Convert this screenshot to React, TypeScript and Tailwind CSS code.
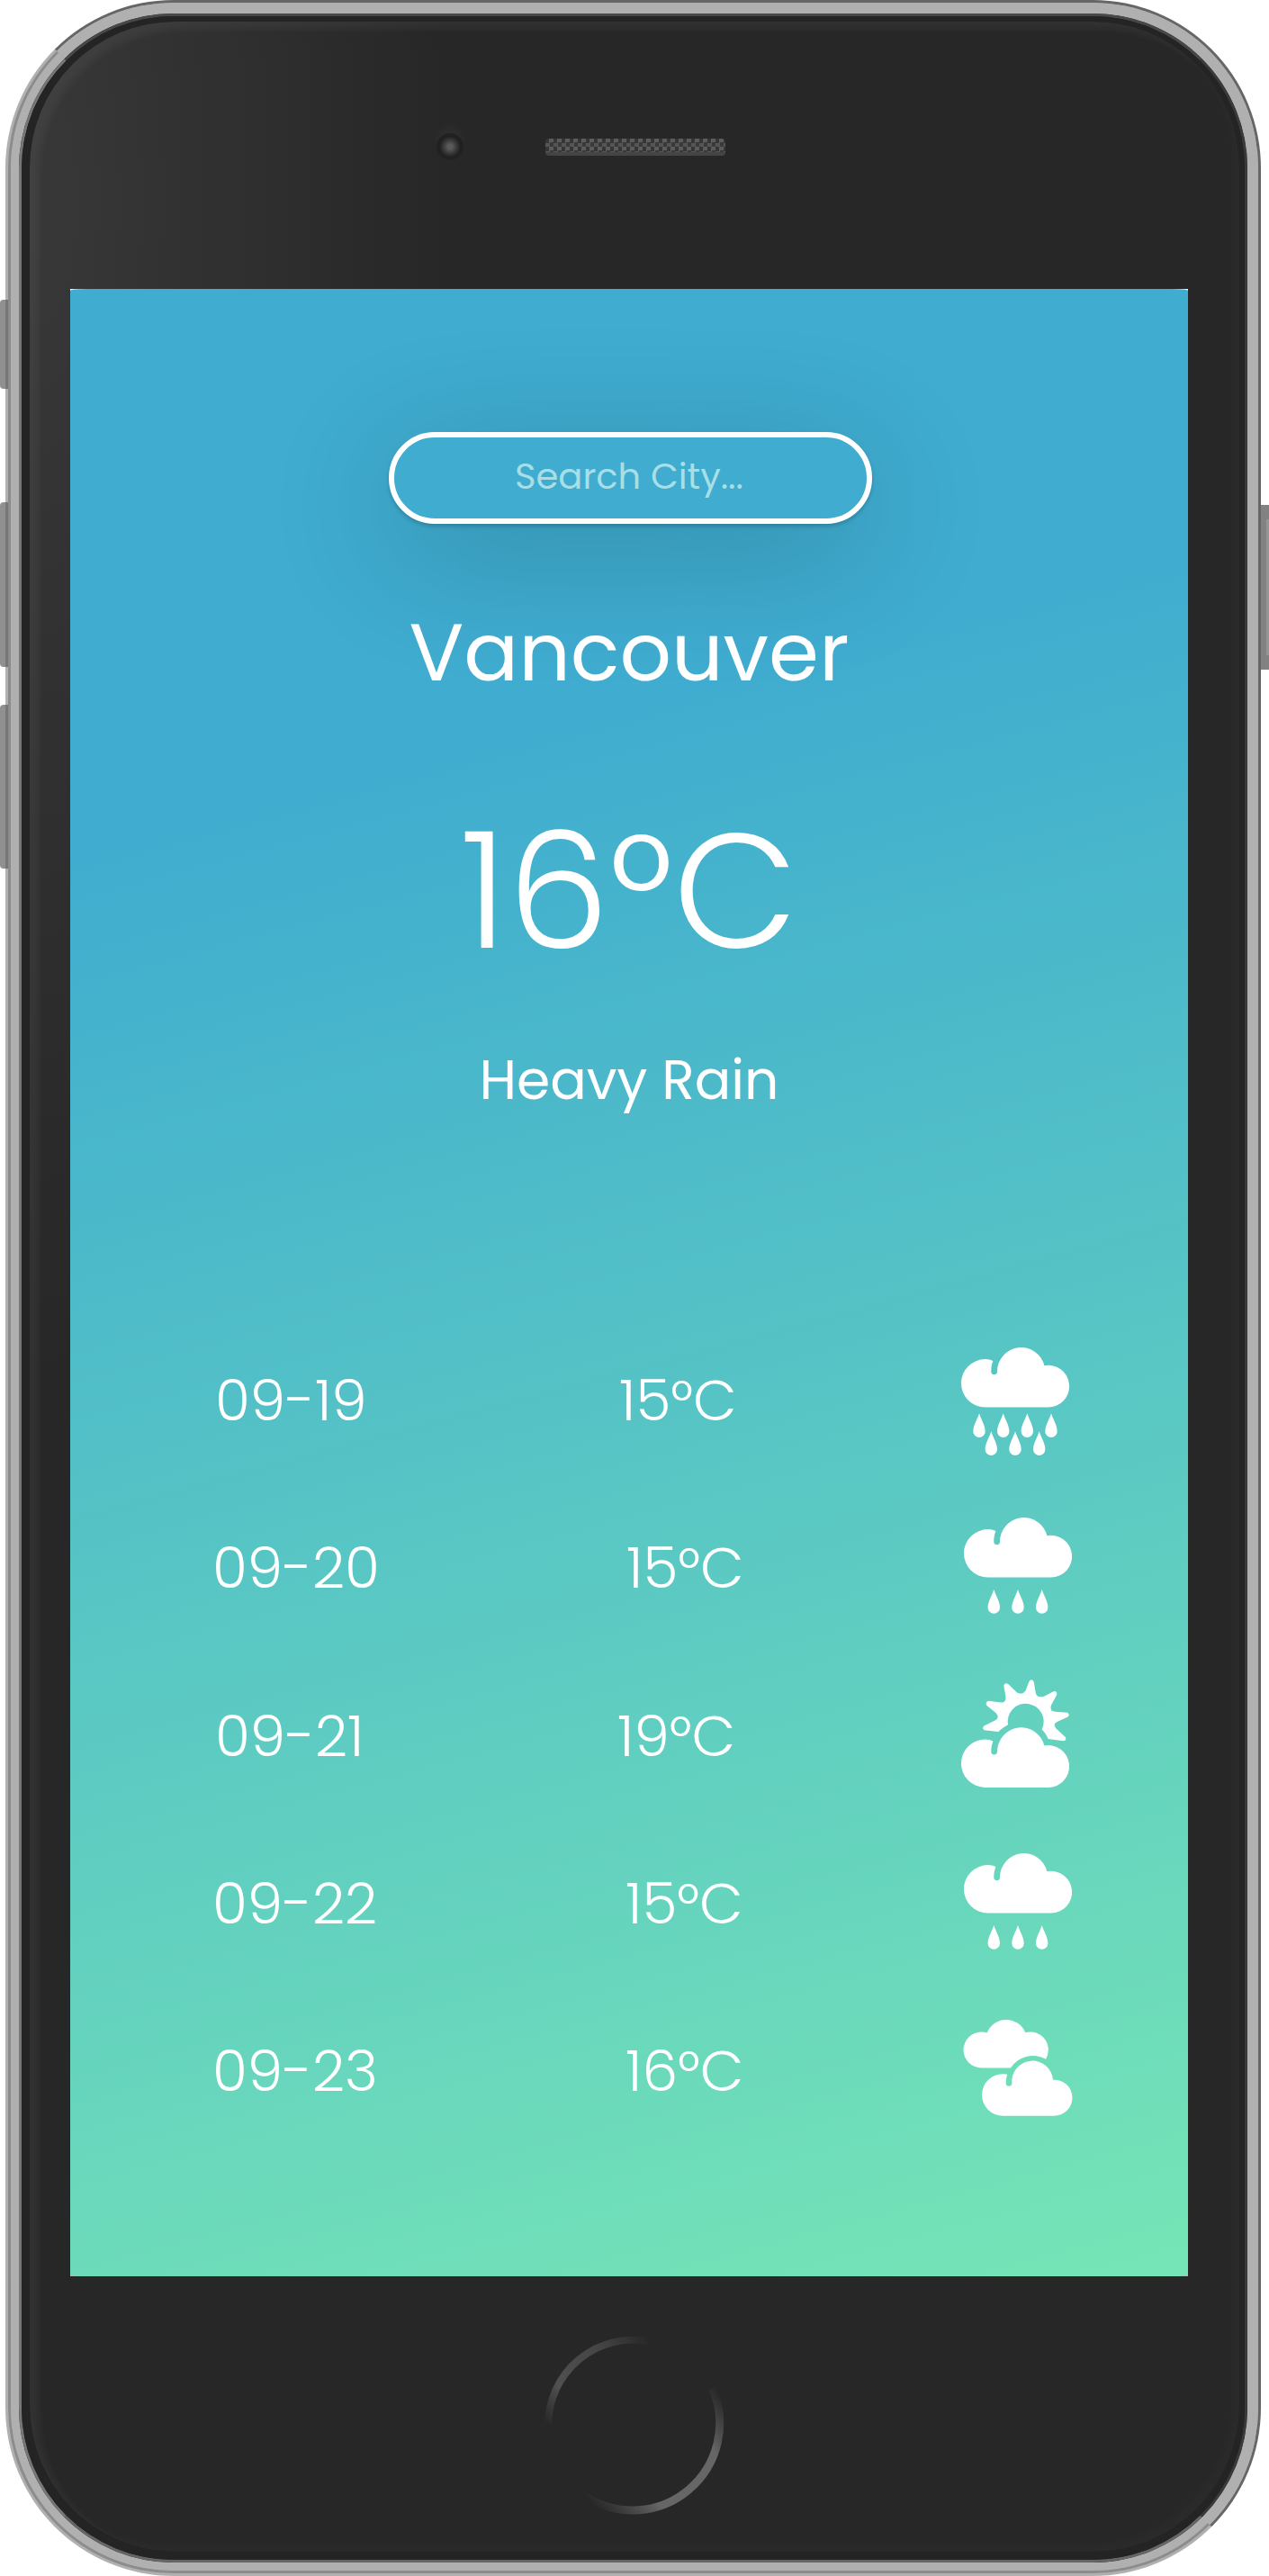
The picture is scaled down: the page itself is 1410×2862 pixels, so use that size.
import React from "react";

const CLOUD =
  "M26.7 66.6A26.7 26.7 0 0 1 26.7 13.1C30 13.1 33 14 35.4 15.1C33.9 18.5 33.3 22.5 33.3 26.8A3.35 3.35 0 0 0 40 26.8A26.6 26.6 0 0 1 92.4 20.2A23.4 23.4 0 1 1 96.7 66.6Z";
const DROP = "M0 0C2 7 6.7 13 6.7 20A6.7 6.7 0 0 1 -6.7 20C-6.7 13 -2 7 0 0Z";
const SUN =
  "M52 50.3A20 20 0 1 1 89.7 55.4C93 58.5 95 62 96.7 66.1L113.5 68.2Q117.5 68 115.8 64L105.5 54.5Q101 49.5 107 46.8L118 41.8Q121.5 39 118 36.8L104.5 35.8Q97.5 35 100 28.5L106.2 17Q107 12.5 102.5 13.2L92 18.8Q84 21 82.7 14.5L80.7 2.5Q78 -2 75.3 2.5L71.5 12.5Q68 17.5 62 14.5L52.3 5Q48 2.8 47.3 7L49.5 19.5Q50 25.8 44 25.5L30.5 23.8Q26 25 28.5 29L38.5 37Q43 42.5 38 45.2L25.3 51.5Q22.5 54.5 26 56.2L41.3 58C44.5 55 48 52.3 52 50.3Z";
const BACK_CLOUD =
  "M20 53.4A19.95 19.95 0 1 1 25.7 14.5A22.9 22.9 0 0 1 68.3 14.3A20 20 0 0 1 91 43.8A29.6 29.6 0 0 0 52 53.4Z";
const FRONT_CLOUD =
  "M43.2 106.7A23.2 23.2 0 0 1 43.2 60.3Q46 60.2 48.3 60.8C47.2 63.7 46.7 67 46.7 70.4A3.3 3.3 0 0 0 53.3 70.4A22.9 22.9 0 0 1 99 66.7A20.03 20.03 0 1 1 100 106.7Z";

type Kind = "heavy" | "rain" | "partly" | "cloudy";

function WeatherIcon({ kind }: { kind: Kind }) {
  return (
    <svg viewBox="0 0 120 120" className="h-[120px] w-[120px] overflow-visible fill-white">
      {kind === "heavy" && (
        <>
          <path d={CLOUD} />
          {[20, 46.7, 73.3, 100].map((x) => (
            <path key={x} d={DROP} transform={`translate(${x} 73.3)`} />
          ))}
          {[33.3, 60, 86.7].map((x) => (
            <path key={x} d={DROP} transform={`translate(${x} 93.3)`} />
          ))}
        </>
      )}
      {kind === "rain" && (
        <>
          <path d={CLOUD} />
          {[33.3, 60, 86.7].map((x) => (
            <path key={x} d={DROP} transform={`translate(${x} 80)`} />
          ))}
        </>
      )}
      {kind === "partly" && (
        <>
          <path d={SUN} />
          <path d={CLOUD} transform="translate(0 53.3)" />
        </>
      )}
      {kind === "cloudy" && (
        <>
          <path d={BACK_CLOUD} />
          <path d={FRONT_CLOUD} />
        </>
      )}
    </svg>
  );
}

const days: { date: string; temp: string; kind: Kind; dateCls: string; tempCls: string; iconCls: string }[] = [
  { date: "09-19", temp: "15°C", kind: "heavy", dateCls: "pl-[161px]", tempCls: "pl-[4px]", iconCls: "pt-[34px]" },
  { date: "09-20", temp: "15°C", kind: "rain", dateCls: "pl-[158px]", tempCls: "pl-[12px]", iconCls: "pl-[3px] pt-[37px]" },
  { date: "09-21", temp: "19°C", kind: "partly", dateCls: "pl-[161px]", tempCls: "pl-[2px]", iconCls: "pt-[30px]" },
  { date: "09-22", temp: "15°C", kind: "rain", dateCls: "pl-[158px]", tempCls: "pl-[11px]", iconCls: "pl-[3px] pt-[37px]" },
  { date: "09-23", temp: "16°C", kind: "cloudy", dateCls: "pl-[158px]", tempCls: "pl-[11px]", iconCls: "pl-[3px] pt-[36px]" },
];

function Screen() {
  return (
    <div className="ml-[45px] h-[2208px] w-[1242px] bg-[linear-gradient(#fff_50%,#b5b5b5_50%)]">
      <div className="flex h-full w-full flex-col items-center rounded-[18px/2px] bg-[linear-gradient(165deg,#3facd0_24%,#75e4b6_99%)] text-white">
        <input
          placeholder="Search City..."
          className="mt-[159px] ml-[3px] h-[102px] w-[537px] rounded-full border-6 border-white bg-transparent pr-[3px] pb-1 text-center text-[40px] placeholder-[#a8dee6] shadow-[0_30px_150px_rgba(0,0,0,0.2),0_3px_4px_rgba(0,0,0,0.18)] outline-none"
        />
        <h1 className="mt-[83px] h-[120px] text-[90px] leading-[120px] font-normal">Vancouver</h1>
        <p className="mt-[105px] h-[200px] text-[180px] leading-[200px] font-light">16°C</p>
        <p className="mt-[70px] h-[80px] text-[60px] leading-[80px]">Heavy Rain</p>
        <ul className="mt-[223px] w-full">
          {days.map((d) => (
            <li key={d.date} className="flex h-[186.3px] text-[63px] leading-[187px] font-light">
              <span className={`w-[606px] ${d.dateCls}`}>{d.date}</span>
              <span className={`w-[384px] ${d.tempCls}`}>{d.temp}</span>
              <span className={d.iconCls}>
                <WeatherIcon kind={d.kind} />
              </span>
            </li>
          ))}
        </ul>
      </div>
    </div>
  );
}

function HomeButton() {
  return (
    <svg viewBox="0 0 250 250" className="mt-[42px] ml-[546px] h-[250px] w-[250px]" fill="none">
      <defs>
        <linearGradient id="arcA" gradientUnits="userSpaceOnUse" x1="28" y1="122" x2="142" y2="28">
          <stop offset="0" stopColor="#505050" stopOpacity="0" />
          <stop offset="0.25" stopColor="#505050" />
          <stop offset="0.7" stopColor="#444" />
          <stop offset="1" stopColor="#444" stopOpacity="0" />
        </linearGradient>
        <linearGradient id="arcB" gradientUnits="userSpaceOnUse" x1="72" y1="203" x2="214" y2="80">
          <stop offset="0" stopColor="#606060" stopOpacity="0" />
          <stop offset="0.3" stopColor="#666" />
          <stop offset="0.75" stopColor="#666" />
          <stop offset="1" stopColor="#606060" stopOpacity="0" />
        </linearGradient>
      </defs>
      <path d="M30 122A95 95 0 0 1 142 30" stroke="url(#arcA)" strokeWidth="8" />
      <path d="M213 83A97 97 0 0 1 72 203" stroke="url(#arcB)" strokeWidth="9" />
    </svg>
  );
}

export default function App() {
  return (
    <div className="relative flex h-[2862px] w-[1410px] overflow-hidden bg-white font-['Poppins','Inter',sans-serif] [font-feature-settings:'cv11']">
      <div className="relative z-10 h-full w-[6px] pt-[333px]">
        <div className="h-[99px] w-[9px] rounded-l-[4px] border-r-3 border-[#777] bg-[#909090]" />
        <div className="mt-[126px] h-[183px] w-[9px] rounded-l-[4px] border-r-3 border-[#777] bg-[#909090]" />
        <div className="mt-[42px] h-[182px] w-[9px] rounded-l-[4px] border-r-3 border-[#777] bg-[#909090]" />
      </div>
      <div className="h-full w-[1395px] rounded-[187px] border-3 border-t-[#666] border-r-[#666] border-b-[#b0b0b0] border-l-[#b0b0b0] bg-[#b0b0b0]">
        <div className="h-full rounded-[184px] border-3 border-t-[#b0b0b0] border-r-[#b0b0b0] border-b-[#8c8c8c] border-l-[#8c8c8c]">
          <div className="h-full rounded-[181px] border-9 border-[#b0b0b0] bg-[#242424]">
            <div className="h-full rounded-[172px] border-3 border-t-[#484848] border-r-[#3a3a3a] border-b-[#666] border-l-[#777] bg-[#242424]">
              <div className="h-full rounded-[169px] border-6 border-b-9 border-l-9 border-[#242424]">
                <div className="h-full rounded-[162px] bg-[radial-gradient(ellipse_460px_1300px_at_0_200px,#383838,transparent)] bg-[#272727] shadow-[inset_10px_8px_8px_rgba(255,255,255,0.05),inset_-8px_-8px_8px_rgba(255,255,255,0.02)]">
                  <div className="flex h-[297px]">
                    <div className="mt-[124px] ml-[452px] h-[30px] w-[30px] rounded-full bg-[radial-gradient(circle,#5a5a5a_0_12%,#404040_30%,#202020_55%,#222_70%)] shadow-[0_-8px_10px_rgba(255,255,255,0.03)]" />
                    <div className="mt-[130px] ml-[91px] h-[19px] w-[200px] rounded-[4px] border-b-4 border-[#444] bg-[conic-gradient(#5c5c5c_25%,#3a3a3a_0_50%,#555_0_75%,#363636_0)] bg-[size:9px_9px]" />
                  </div>
                  <Screen />
                  <HomeButton />
                </div>
              </div>
            </div>
          </div>
        </div>
      </div>
      <div className="h-full w-[9px] pt-[561px]">
        <div className="h-[183px] w-full border-y-[16px] border-l-6 border-[#828282] bg-[#969696]" />
      </div>
    </div>
  );
}
